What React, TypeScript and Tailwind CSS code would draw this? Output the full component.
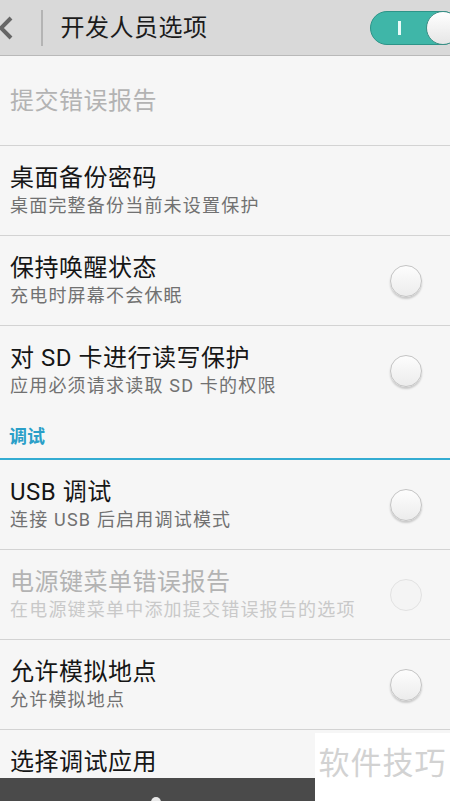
import React from "react";

type Item = {
  title: string;
  sub?: string;
  check?: boolean;
  disabled?: boolean;
  border?: boolean;
};

const TOP: Item[] = [
  { title: "提交错误报告", disabled: true, border: true },
  { title: "桌面备份密码", sub: "桌面完整备份当前未设置保护", border: true },
  { title: "保持唤醒状态", sub: "充电时屏幕不会休眠", check: true, border: true },
  { title: "对 SD 卡进行读写保护", sub: "应用必须请求读取 SD 卡的权限", check: true },
];

const DEBUG: Item[] = [
  { title: "USB 调试", sub: "连接 USB 后启用调试模式", check: true, border: true },
  {
    title: "电源键菜单错误报告",
    sub: "在电源键菜单中添加提交错误报告的选项",
    check: true,
    disabled: true,
    border: true,
  },
  { title: "允许模拟地点", sub: "允许模拟地点", check: true, border: true },
  // subtitle hidden under the nav bar
  { title: "选择调试应用", sub: "\u00a0" },
];

function Circle({ disabled }: { disabled?: boolean }) {
  return (
    <div
      className={
        disabled
          ? "h-8 w-8 shrink-0 rounded-full border border-[#e2e2e2] bg-[#f4f4f4]"
          : "h-8 w-8 shrink-0 rounded-full border border-[#c4c4c4] bg-gradient-to-b from-[#fdfdfd] to-[#ececec] shadow-[0_2px_2px_rgba(0,0,0,0.18)]"
      }
    />
  );
}

function Row({ item }: { item: Item }) {
  return (
    <div
      className={
        "flex h-[90px] items-center pl-[10px] pr-[28px] " +
        (item.border ? "border-b-[1.5px] border-[#d3d3d3]" : "")
      }
    >
      <div className="flex min-w-0 flex-1 flex-col">
        <div
          className={
            "text-[24px] leading-[30px] tracking-[0.5px] " +
            (item.disabled ? "text-[#b3b3b3]" : "text-[#161616]")
          }
        >
          {item.title}
        </div>
        {item.sub !== undefined && (
          <div
            className={
              "text-[18px] leading-[26px] tracking-[1.2px] " +
              (item.disabled ? "text-[#c9c9c9]" : "text-[#717171]")
            }
          >
            {item.sub}
          </div>
        )}
      </div>
      {item.check && <Circle disabled={item.disabled} />}
    </div>
  );
}

export default function App() {
  return (
    <div className="relative h-[801px] w-[450px] overflow-hidden bg-[#f6f6f6] font-['Roboto','Noto_Sans_CJK_SC',sans-serif]">
      {/* action bar */}
      <div className="flex h-[56px] items-center border-b-[1.5px] border-[#b9b9b9] bg-[#d9d9d9]">
        <svg width="18" height="28" viewBox="0 0 18 28" className="ml-[-4px] shrink-0">
          <path d="M15 4 L5 14 L15 24" fill="none" stroke="#666" strokeWidth="4" strokeLinejoin="miter" />
        </svg>
        <div className="ml-[27px] h-[36px] w-[1.5px] bg-[#b4b4b4]" />
        <div className="ml-[18px] flex-1 text-[24px] tracking-[0.5px] text-[#1b1b1b]">开发人员选项</div>
        <div className="relative mr-[-10px] flex h-[34px] w-[90px] items-center rounded-full border border-[#2d9488] bg-[#3fb6a8]">
          <div className="ml-[27px] h-[14px] w-[2.5px] bg-[#e9fbf8]" />
          <div className="absolute right-[-1px] top-[-1px] h-[34px] w-[34px] rounded-full border border-[#3d8f86] bg-gradient-to-b from-white to-[#e6e6e6]" />
        </div>
      </div>

      {TOP.map((it) => (
        <Row key={it.title} item={it} />
      ))}

      {/* category */}
      <div className="flex h-[44px] items-center border-b-2 border-[#34acd2] pl-[9px] pb-[2px] text-[18px] font-bold text-[#2a9fc8]">
        调试
      </div>

      {DEBUG.map((it) => (
        <Row key={it.title} item={it} />
      ))}

      {/* navigation bar */}
      <div className="absolute bottom-0 left-0 flex h-[23px] w-[315px] justify-center bg-[#4a4a4a]">
        <div className="mt-[19px] ml-[-4px] h-[8px] w-[10px] rounded-t-full bg-[#e8e8e8]" />
      </div>

      {/* watermark */}
      <div className="absolute bottom-0 right-0 flex h-[68px] w-[135px] items-start justify-center bg-white pt-[13px] text-[31px] leading-[36px] tracking-[1px] text-[#d2d2d2]">
        软件技巧
      </div>
    </div>
  );
}
